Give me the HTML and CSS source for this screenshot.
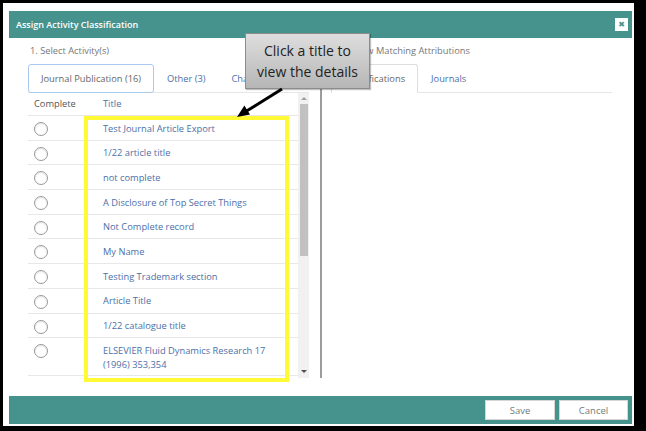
FILE: index.html
```html
<!DOCTYPE html>
<html lang="en">
<head>
	<meta charset="UTF-8">
	<title>Assign Activity Classification</title>
	<link rel="stylesheet" href="styles.css">
</head>
<body>
	<div class="frame">
		<div class="modal">
			<div class="modal-head">
				<span class="modal-title">Assign Activity Classification</span>
				<span class="close">&#x2716;</span>
			</div>
			<div class="modal-body">
				<div class="col">
					<div class="step">1. Select Activity(s)</div>
					<ul class="tabs">
						<li class="active focus">Journal Publication (16)</li>
						<li>Other (3)</li>
						<li>Chapters (2)</li>
					</ul>
					<div class="list">
						<div class="rows">
							<div class="row head"><div class="c1">Complete</div><div class="c2">Title</div></div>
							<div class="row"><div class="c1"><span class="radio"></span></div><div class="c2">Test Journal Article Export</div></div>
							<div class="row"><div class="c1"><span class="radio"></span></div><div class="c2">1/22 article title</div></div>
							<div class="row"><div class="c1"><span class="radio"></span></div><div class="c2">not complete</div></div>
							<div class="row"><div class="c1"><span class="radio"></span></div><div class="c2">A Disclosure of Top Secret Things</div></div>
							<div class="row"><div class="c1"><span class="radio"></span></div><div class="c2">Not Complete record</div></div>
							<div class="row"><div class="c1"><span class="radio"></span></div><div class="c2">My Name</div></div>
							<div class="row"><div class="c1"><span class="radio"></span></div><div class="c2">Testing Trademark section</div></div>
							<div class="row"><div class="c1"><span class="radio"></span></div><div class="c2">Article Title</div></div>
							<div class="row"><div class="c1"><span class="radio"></span></div><div class="c2">1/22 catalogue title</div></div>
							<div class="row tall"><div class="c1"><span class="radio"></span></div><div class="c2">ELSEVIER Fluid Dynamics Research 17 (1996) 353,354</div></div>
						</div>
						<div class="scrollbar">
							<span class="arrow-up"></span>
							<span class="thumb"></span>
							<span class="track"></span>
							<span class="arrow-down"></span>
						</div>
					</div>
				</div>
				<div class="divider"></div>
				<div class="col">
					<div class="step">2. Review Matching Attributions</div>
					<ul class="tabs">
						<li class="active">Classifications</li>
						<li>Journals</li>
					</ul>
				</div>
			</div>
			<div class="modal-foot">
				<button class="btn btn-save">Save</button>
				<button class="btn btn-cancel">Cancel</button>
			</div>
		</div>
	</div>

	<!-- annotation layer -->
	<div class="highlight"></div>
	<div class="callout">Click a title to<br>view the details</div>
	<svg class="pointer" width="646" height="431" viewBox="0 0 646 431">
		<line x1="282" y1="89" x2="245" y2="112" stroke="#000" stroke-width="3"/>
		<polygon points="237,117 244.4,105.6 250,114.6" fill="#000"/>
	</svg>
</body>
</html>
```

FILE: styles.css
```css
*{
	margin: 0;
	padding: 0;
	box-sizing: border-box;
}
body{
	background: #000;
	font-family: "Open Sans", "Liberation Sans", sans-serif;
	width: 646px;
	height: 431px;
	overflow: hidden;
	position: relative;
}
.frame{
	margin: 3px 12px 0 3px;
	height: 423px;
	padding: 8px 2px 2px 6px;
	background: #fff;
}
.modal{
	height: 100%;
	display: flex;
	flex-direction: column;
}
.modal-head{
	height: 27px;
	background: #46938e;
	display: flex;
	align-items: center;
	justify-content: space-between;
	padding: 0 4px 0 7px;
	color: #fff;
	font-size: 9px;
	font-weight: 600;
}
.close{
	width: 13px;
	height: 13px;
	background: #fff;
	color: #46938e;
	font-family: "DejaVu Sans", sans-serif;
	font-size: 8px;
	line-height: 13px;
	text-align: center;
}
.modal-body{
	flex: 1;
	display: flex;
	padding: 0 20px 0 19px;
}
.col{
	width: 281px;
}
.step{
	height: 26px;
	padding: 6px 0 0 2px;
	line-height: 14px;
	font-size: 9.3px;
	color: #777;
}
.tabs{
	display: flex;
	list-style: none;
	height: 29px;
	border-bottom: 1px solid #e6e6e6;
}
.tabs li{
	height: 29px;
	padding: 0 12px;
	line-height: 27px;
	font-size: 9.3px;
	color: #4c6fa8;
	border: 1px solid transparent;
}
.tabs li.active{
	color: #666;
	border-color: #dedede;
	border-bottom-color: #fff;
	border-radius: 3px 3px 0 0;
	background: #fff;
}
.tabs li.focus{
	border-color: #abc8ee;
	border-radius: 3px;
}
.list{
	display: flex;
	height: 285px;
	overflow: hidden;
}
.rows{
	width: 270px;
}
.row{
	display: flex;
	height: 24.7px;
	border-bottom: 1px solid #e8e8e8;
	font-size: 9.3px;
	line-height: 14px;
}
.row.head{
	height: 23px;
	color: #555;
}
.row.head .c1,
.row.head .c2{
	padding-top: 4px;
}
.row.tall{
	height: 37.4px;
}
.c1{
	width: 75px;
	padding: 6px 0 0 6px;
}
.c2{
	width: 195px;
	padding: 5.5px 10px 0 0;
	color: #4c6fa8;
}
.radio{
	display: block;
	width: 14px;
	height: 14px;
	border: 1px solid #9a9a9a;
	border-radius: 50%;
	background: #fff;
	box-shadow: inset 0 1px 2px rgba(0,0,0,0.12);
}
.scrollbar{
	width: 11px;
	background: #f1f1f1;
	display: flex;
	flex-direction: column;
	align-items: center;
}
.arrow-up,
.arrow-down{
	width: 0;
	height: 0;
	border-left: 3px solid transparent;
	border-right: 3px solid transparent;
}
.arrow-up{
	margin: 4px 0 4px;
	border-bottom: 3px solid #a0a0a0;
}
.arrow-down{
	margin: 2px 0 5px;
	border-top: 3px solid #505050;
}
.thumb{
	width: 8px;
	height: 152px;
	background: #c1c1c1;
}
.track{
	flex: 1;
}
.divider{
	width: 2px;
	background: #9c9c9c;
	margin: 26px 9px 18px 11px;
}
.modal-foot{
	height: 28px;
	background: #46938e;
	display: flex;
	justify-content: flex-end;
	align-items: center;
	gap: 4px;
	padding-right: 4px;
}
.btn{
	height: 20px;
	background: #fff;
	border: 1px solid #d6d6d6;
	color: #6f7d7c;
	font-family: "Open Sans", "Liberation Sans", sans-serif;
	font-size: 9.5px;
}
.btn-save{
	width: 70px;
}
.btn-cancel{
	width: 69px;
}
.highlight{
	position: absolute;
	left: 84px;
	top: 116px;
	width: 205px;
	height: 266px;
	border: 4px solid #fffa35;
}
.callout{
	position: absolute;
	left: 245px;
	top: 33px;
	width: 125px;
	height: 56px;
	padding-top: 6px;
	border: 1px solid #8c8c8c;
	background: linear-gradient(#dedede, #b6b6b6);
	box-shadow: 1px 1px 1px rgba(0,0,0,0.25);
	text-align: center;
	font-size: 14px;
	line-height: 21px;
	color: #222;
}
.pointer{
	position: absolute;
	left: 0;
	top: 0;
}
```
